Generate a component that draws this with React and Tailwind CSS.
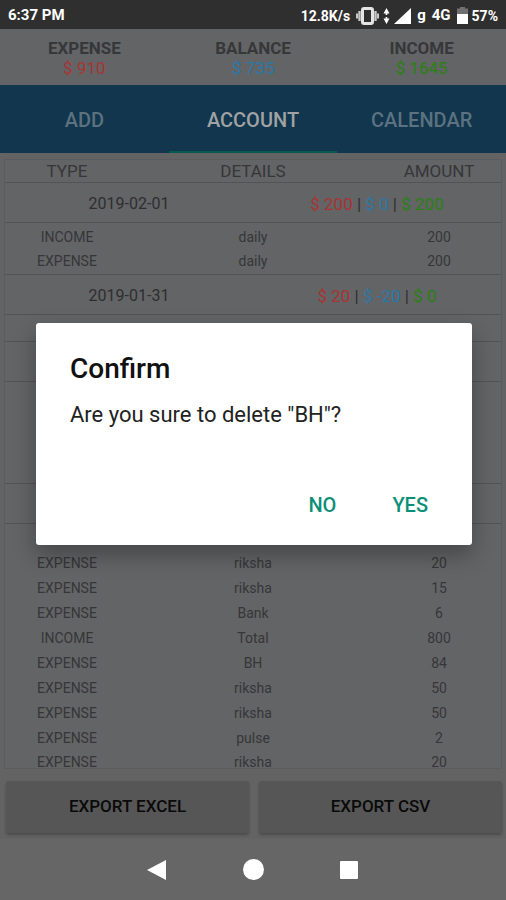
const SUMMARY = [
  { label: "EXPENSE", value: "$ 910", color: "text-[#a83434]" },
  { label: "BALANCE", value: "$ 735", color: "text-[#2a78a6]" },
  { label: "INCOME", value: "$ 1645", color: "text-[#2a8012]" },
];

const TABS = ["ADD", "ACCOUNT", "CALENDAR"];

const GROUPS = [
  {
    date: "2019-02-01",
    totals: ["$ 200", "$ 0", "$ 200"],
    rows: [
      ["INCOME", "daily", "200"],
      ["EXPENSE", "daily", "200"],
    ],
  },
  {
    date: "2019-01-31",
    totals: ["$ 20", "$ -20", "$ 0"],
    rows: [["", "", ""]],
  },
  {
    date: "",
    totals: null,
    rows: [
      ["", "", ""],
      ["", "", ""],
      ["", "", ""],
      ["", "", ""],
    ],
  },
  {
    date: "",
    totals: null,
    rows: [
      ["", "", ""],
      ["EXPENSE", "riksha", "20"],
      ["EXPENSE", "riksha", "15"],
      ["EXPENSE", "Bank", "6"],
      ["INCOME", "Total", "800"],
      ["EXPENSE", "BH", "84"],
      ["EXPENSE", "riksha", "50"],
      ["EXPENSE", "riksha", "50"],
      ["EXPENSE", "pulse", "2"],
      ["EXPENSE", "riksha", "20"],
    ],
  },
];

function StatusBar() {
  return (
    <div className="flex h-[29px] shrink-0 items-center justify-between bg-[#2f2f2f] px-2 pt-0.5 text-[15px] font-bold text-white">
      <span>6:37 PM</span>
      <div className="flex items-center">
        <span className="text-sm">12.8K/s</span>
        <svg className="ml-1.5 h-[18px] w-[23px]" viewBox="0 0 23 18" aria-hidden="true">
          <path d="M3.500 4v10M19.500 4v10" stroke="#c8c8c8" strokeWidth="2.400" />
          <path d="M1 6.500v5M22 6.500v5" stroke="#c8c8c8" strokeWidth="2" />
          <rect x="6.500" y="1.500" width="10" height="15" rx="1.500" fill="none" stroke="#e4e4e4" strokeWidth="3" />
        </svg>
        <svg className="ml-1 h-4 w-[7px]" viewBox="0 0 7 16" fill="#fff" aria-hidden="true">
          <path d="M3.500 0L6.500 5.500H4.300v1.500H2.700V5.500H.5zM3.500 16L.5 10.500h2.200V9h1.600v1.500h2.200z" />
        </svg>
        <svg className="ml-1 h-4 w-[17px]" viewBox="0 0 17 16" fill="#fff" aria-hidden="true">
          <path d="M17 0v16H0z" />
        </svg>
        <span className="ml-1.5">g</span>
        <span className="ml-1.5">4G</span>
        <svg className="ml-1.5 h-[17px] w-[11px]" viewBox="0 0 11 17" aria-hidden="true">
          <path d="M3 0h5v1.500h3V7H0V1.500h3z" fill="#707070" />
          <path d="M0 7h11v10H0z" fill="#fff" />
        </svg>
        <span className="ml-1 text-sm">57%</span>
      </div>
    </div>
  );
}

function Group({ group }) {
  return (
    <tbody className="border-b border-[#525355]">
      <tr className="h-10 border-b border-[#525355] text-[#2e2e30]">
        <td colSpan={2} className="pt-1 text-base">
          {group.date}
        </td>
        <td colSpan={2} className="pt-1 text-[17px]">
          {group.totals && (
            <>
              <span className="text-[#a83434]">{group.totals[0]}</span> |{" "}
              <span className="text-[#2a78a6]">{group.totals[1]}</span> |{" "}
              <span className="text-[#2a8012]">{group.totals[2]}</span>
            </>
          )}
        </td>
      </tr>
      <tr className="h-0.5">
        <td colSpan={4} />
      </tr>
      {group.rows.map(([type, details, amount], i) => (
        <tr key={i} className="h-[25px]">
          <td>{type}</td>
          <td colSpan={2}>{details}</td>
          <td>{amount}</td>
        </tr>
      ))}
    </tbody>
  );
}

function Ledger() {
  return (
    <div className="mx-1 mt-1.5 min-h-0 flex-1 overflow-hidden border border-[#5b5c5e] bg-[#636466]">
      <table className="w-full table-fixed border-collapse text-center text-sm leading-4 text-[#363638]">
        <thead>
          <tr className="h-[22px] border-b border-[#525355] text-[17px] leading-4 text-[#363638]">
            <th className="w-1/4 font-normal">TYPE</th>
            <th colSpan={2} className="w-1/2 font-normal">
              DETAILS
            </th>
            <th className="w-1/4 font-normal">AMOUNT</th>
          </tr>
        </thead>
        {GROUPS.map((group, i) => (
          <Group key={i} group={group} />
        ))}
      </table>
    </div>
  );
}

function ConfirmDialog() {
  return (
    <div className="absolute inset-0 flex items-center justify-center pr-[34px] pl-9">
      <div
        role="dialog"
        aria-labelledby="confirm-title"
        className="flex h-[222px] w-full flex-col rounded-[3px] bg-white px-[34px] pt-7 pb-4 shadow-[0_10px_22px_rgba(0,0,0,0.3)]"
      >
        <h2 id="confirm-title" className="text-[28px] leading-9 font-medium text-[#111]">
          Confirm
        </h2>
        <p className="mt-3 text-[22px] leading-8 text-[#222]">Are you sure to delete "BH"?</p>
        <div className="mt-auto flex justify-end gap-9 text-xl leading-6 font-medium text-[#0c8f78]">
          <button type="button" className="px-2.5 py-3">
            NO
          </button>
          <button type="button" className="px-2.5 py-3">
            YES
          </button>
        </div>
      </div>
    </div>
  );
}

export default function App() {
  return (
    <div className="flex h-screen flex-col bg-[#636363] font-['Roboto',sans-serif]">
      <StatusBar />
      <div className="relative flex min-h-0 flex-1 flex-col">
        <dl className="grid h-14 shrink-0 grid-cols-3 content-center bg-[#636466] pt-0.5 text-center text-[17px] leading-5">
          {SUMMARY.map((item) => (
            <div key={item.label}>
              <dt className="font-bold text-[#363739]">{item.label}</dt>
              <dd className={item.color}>{item.value}</dd>
            </div>
          ))}
        </dl>
        <nav className="grid h-[68px] shrink-0 grid-cols-3 bg-[#11364d] text-xl font-medium">
          {TABS.map((tab) => (
            <button
              key={tab}
              type="button"
              className={
                tab === "ACCOUNT"
                  ? "border-b-2 border-[#075a50] pt-1 text-[#a0a2a4]"
                  : "border-b-2 border-transparent pt-1 text-[#5c7280]"
              }
            >
              {tab}
            </button>
          ))}
        </nav>
        <Ledger />
        <div className="grid shrink-0 grid-cols-2 gap-2.5 pt-3 pr-1 pb-1.5 pl-1.5">
          <button type="button" className="h-[52px] rounded-[3px] bg-[#565656] text-[17px] font-medium text-[#0a0a0a] shadow-[0_2px_3px_rgba(0,0,0,0.25)]">
            EXPORT EXCEL
          </button>
          <button type="button" className="h-[52px] rounded-[3px] bg-[#565656] text-[17px] font-medium text-[#0a0a0a] shadow-[0_2px_3px_rgba(0,0,0,0.25)]">
            EXPORT CSV
          </button>
        </div>
        <ConfirmDialog />
      </div>
      <div className="flex h-[61px] shrink-0 items-center justify-center gap-[75px] bg-[#666]">
        <button type="button" aria-label="Back">
          <svg className="h-5 w-[21px]" viewBox="0 0 21 20" fill="#fff">
            <path d="M19 0v20L0 10z" />
          </svg>
        </button>
        <button type="button" aria-label="Home">
          <svg className="h-[21px] w-[21px]" viewBox="0 0 21 21" fill="#fff">
            <circle cx="10.500" cy="10.500" r="10.500" />
          </svg>
        </button>
        <button type="button" aria-label="Recent apps">
          <svg className="h-5 w-[21px]" viewBox="0 0 21 20" fill="#fff">
            <rect x="1" y="1" width="18" height="18" rx="1" />
          </svg>
        </button>
      </div>
    </div>
  );
}
